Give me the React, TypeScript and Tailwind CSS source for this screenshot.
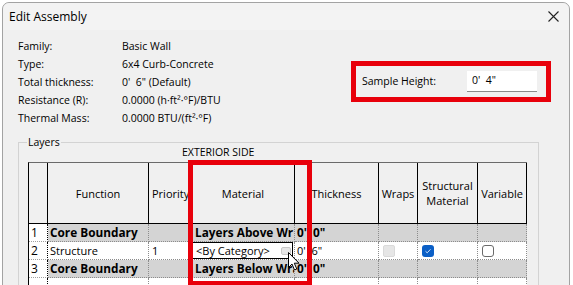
import React from "react";

const cols = [19, 101, 43, 103, 84, 39, 60, 49];

function Cb({ kind }: { kind: "disabled" | "checked" | "empty" }) {
  if (kind === "disabled")
    return <div className="w-[12px] h-[12px] rounded-[2px] bg-[#e6e6e6] border border-[#dadada]" />;
  if (kind === "checked")
    return (
      <div className="w-[12px] h-[12px] rounded-[3px] bg-[#0b5fc6] flex items-center justify-center">
        <svg width="8" height="8" viewBox="0 0 8 8">
          <path d="M1.5 4.2 L3.2 5.8 L6.5 2.3" stroke="#cfe0f5" strokeWidth="1" fill="none" />
        </svg>
      </div>
    );
  return <div className="w-[12px] h-[12px] rounded-[3px] bg-white border border-[#6a6a6a]" />;
}

export default function App() {
  const font = { fontFamily: '"Open Sans", "Noto Sans", sans-serif' };
  return (
    <div className="w-[573px] h-[285px] overflow-hidden bg-white relative" style={font}>
      <div className="ml-[2px] mt-[2px] w-[568px] h-[300px] border border-[#a3a3a3] rounded-t-[7px] bg-[#f0f0f0] text-black">
        {/* title bar */}
        <div className="h-[27px] flex items-center pl-[6px] pr-[6px] bg-[#f3f3f3] rounded-t-[7px]">
          <span className="text-[12px]">Edit Assembly</span>
          <svg className="ml-auto mr-[4px]" width="11" height="11" viewBox="0 0 11 11">
            <path d="M0.5 0.5 L10.5 10.5 M10.5 0.5 L0.5 10.5" stroke="#222" strokeWidth="1.1" />
          </svg>
        </div>
        {/* body */}
        <div className="pl-[15px] pt-[7px]">
          <div className="flex">
            <div className="w-[333px] shrink-0 text-[10.5px] leading-[18px]">
              {[
                ["Family:", "Basic Wall"],
                ["Type:", "6x4 Curb-Concrete"],
                ["Total thickness:", "0'  6\" (Default)"],
                ["Resistance (R):", "0.0000 (h·ft²·°F)/BTU"],
                ["Thermal Mass:", "0.0000 BTU/(ft²·°F)"],
              ].map(([a, b]) => (
                <div key={a} className="flex h-[18px]">
                  <div className="w-[104px]">{a}</div>
                  <div className="whitespace-pre">{b}</div>
                </div>
              ))}
            </div>
            <div className="mt-[24px] w-[200px] h-[41px] border-[5px] border-[#e8000b] flex items-center pl-[6px]">
              <span className="text-[10.5px]">Sample Height:</span>
              <div className="ml-auto mr-[9px] w-[70px] h-[21px] bg-white border-b border-[#8a8a8a] flex items-center pl-[5px] text-[10.5px] whitespace-pre">
                0'  4"
              </div>
            </div>
          </div>
          {/* group box */}
          <div className="relative mt-[15px] w-[521px] h-[200px] border-t border-l border-r border-[#d3d3d3]">
            <div className="absolute -top-[9px] left-[8px] px-[1px] bg-[#f0f0f0] text-[10.5px] leading-[16px]">Layers</div>
            <div className="h-[19px] flex items-center pl-[163px] text-[10.5px]">EXTERIOR SIDE</div>
            <div className="relative ml-[9px] w-[499px] border-l border-t border-l-black border-t-[#6a6a6a] text-[11px]">
              {/* header */}
              <div className="flex h-[61px] bg-[#f0f0f0]">
                {cols.map((w, i) => (
                  <div
                    key={i}
                    style={{ width: w }}
                    className="border-r border-b border-black flex items-center justify-center text-center leading-[15px] overflow-hidden whitespace-nowrap shrink-0"
                  >
                    {i === 1 && "Function"}
                    {i === 2 && <span className="pl-[3px] self-center w-full text-left">Priority</span>}
                    {i === 3 && "Material"}
                    {i === 4 && "Thickness"}
                    {i === 5 && "Wraps"}
                    {i === 6 && (
                      <span>
                        Structural
                        <br />
                        Material
                      </span>
                    )}
                    {i === 7 && "Variable"}
                  </div>
                ))}
              </div>
              {/* rows */}
              {[
                { n: "1", gray: true, bold: true, f: "Core Boundary", p: "", m: "Layers Above Wr", t: "0'  0\"" },
                { n: "2", gray: false, bold: false, f: "Structure", p: "1", m: "", t: "0'  6\"" },
                { n: "3", gray: true, bold: true, f: "Core Boundary", p: "", m: "Layers Below Wra", t: "0'  0\"" },
                { n: "", gray: false, bold: false, f: "", p: "", m: "", t: "" },
              ].map((r, ri) => (
                <div key={ri} className="flex h-[18px]">
                  <div
                    style={{ width: cols[0] }}
                    className="shrink-0 bg-white border-r border-black border-b border-b-[#a0a0a0] border-dotted pl-[2px] leading-[17px] text-[12px]"
                  >
                    {r.n}
                  </div>
                  {cols.slice(1).map((w, ci) => {
                    const c = ci + 1;
                    let content: React.ReactNode = null;
                    if (c === 1) content = <span className="pl-[2px]">{r.f}</span>;
                    if (c === 2) content = <span className="pl-[3px]">{r.p}</span>;
                    if (c === 3)
                      content =
                        ri === 1 ? (
                          <div className="h-[17px] w-[101px] bg-white border border-black flex items-center pl-[3px] relative">
                            &lt;By Category&gt;
                            <div className="absolute right-[1px] top-[4px] w-[10px] h-[8px] rounded-[2px] bg-[#e6e6e6] border border-[#c8c8c8]" />
                          </div>
                        ) : (
                          <span className="pl-[3px]">{r.m}</span>
                        );
                    if (c === 4) content = <span className="pl-[2px] whitespace-pre">{r.t}</span>;
                    if (ri === 1 && c === 5) content = <div className="pl-[4px] pt-[3px]"><Cb kind="disabled" /></div>;
                    if (ri === 1 && c === 6) content = <div className="pl-[4px] pt-[3px]"><Cb kind="checked" /></div>;
                    if (ri === 1 && c === 7) content = <div className="pl-[4px] pt-[3px]"><Cb kind="empty" /></div>;
                    return (
                      <div
                        key={c}
                        style={{ width: w }}
                        className={`shrink-0 overflow-hidden whitespace-nowrap border-r border-b border-dotted border-[#8c8c8c] leading-[17px] ${
                          r.gray ? "bg-[#d4d4d4]" : "bg-white"
                        } ${r.bold ? "font-bold text-[11.8px]" : ""}`}
                      >
                        {content}
                      </div>
                    );
                  })}
                </div>
              ))}
              {/* cursor */}
              <svg className="absolute left-[259px] top-[89px]" width="13" height="20" viewBox="0 0 13 20">
                <path d="M0.5 0.5 L0.5 15.5 L4 12 L6.5 18 L8.8 17 L6.3 11.2 L11 11.2 Z" fill="white" stroke="black" strokeWidth="1" />
              </svg>
              {/* red annotation */}
              <div className="absolute left-[159px] -top-[3px] w-[124px] h-[126px] border-[5px] border-[#e8000b]" />
            </div>
          </div>
        </div>
      </div>
    </div>
  );
}
